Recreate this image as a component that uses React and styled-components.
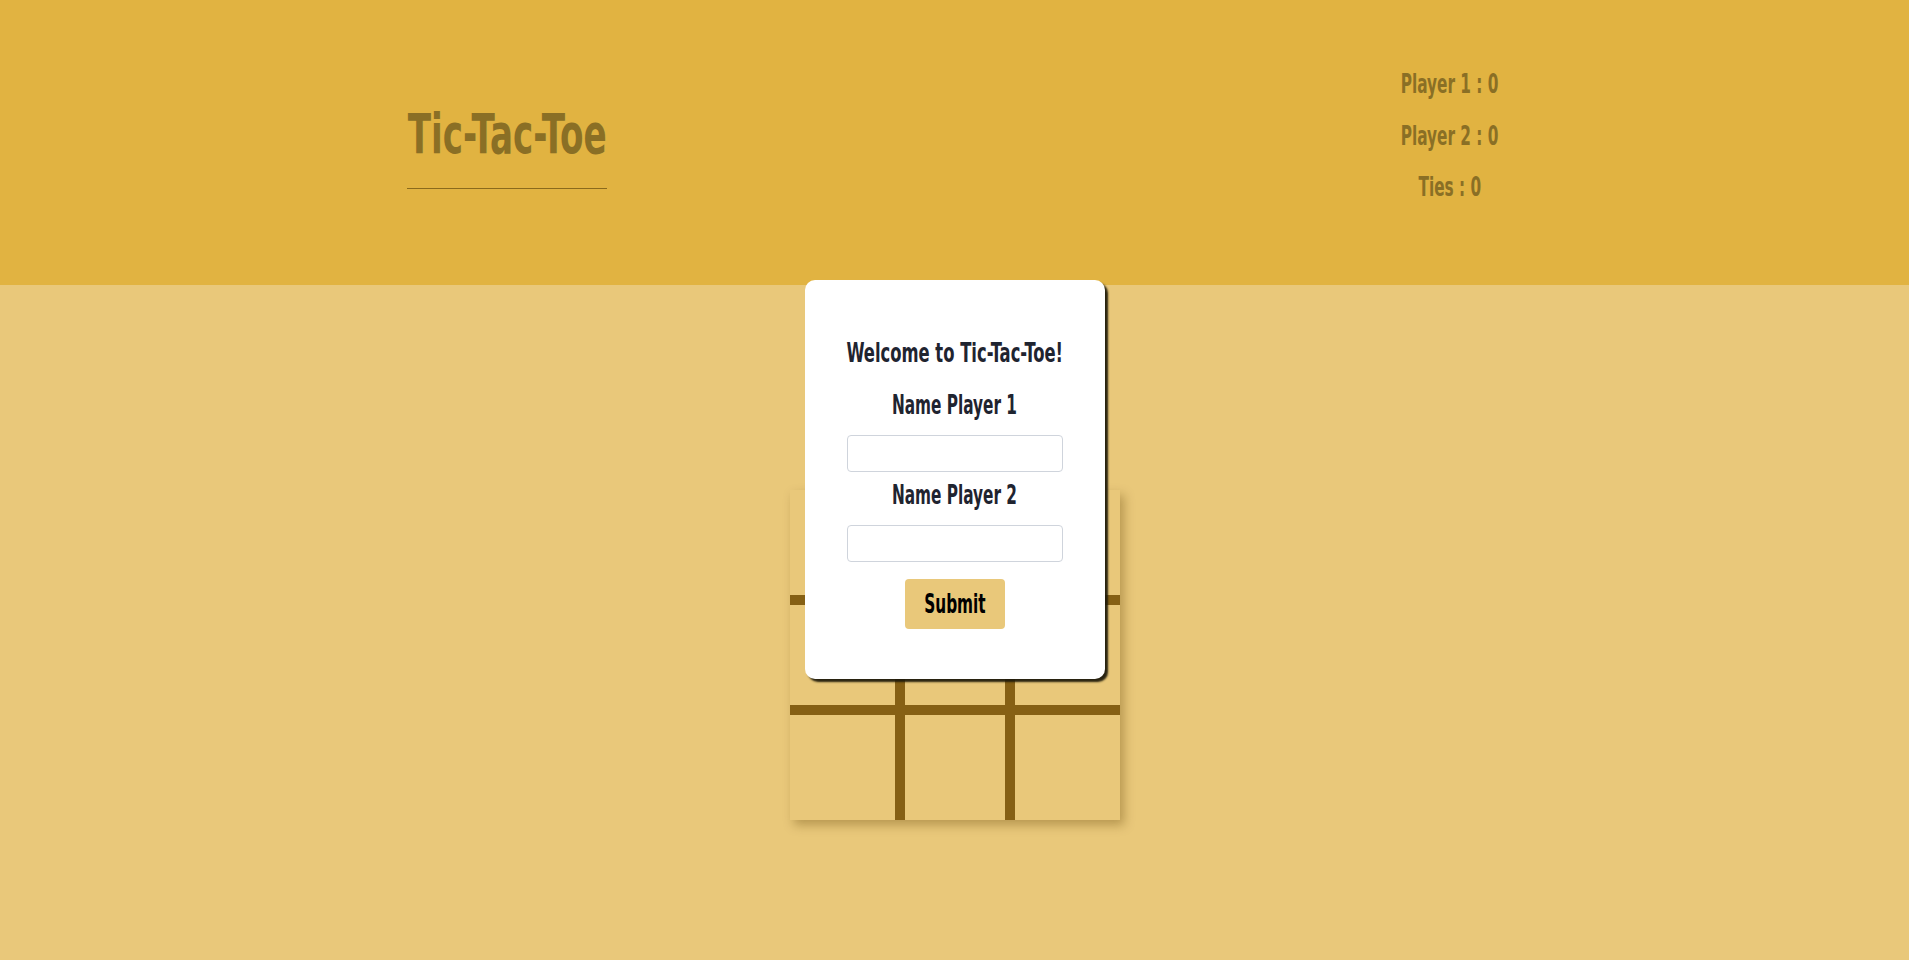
import React from "react";
import styled, { createGlobalStyle } from "styled-components";

const GlobalStyle = createGlobalStyle`
  html, body {
    margin: 0;
    padding: 0;
    background: #e9c87a;
    font-family: "DejaVu Sans Condensed", "DejaVu Sans", "Liberation Sans", sans-serif;
    font-weight: 700;
  }
  * { box-sizing: border-box; }
`;

const cells = [0, 1, 2, 3, 4, 5, 6, 7, 8];

const App = () => {
  return (
    <Page>
      <GlobalStyle />
      <Header>
        <TitleBox>
          <Title>Tic-Tac-Toe</Title>
        </TitleBox>
        <Scores>
          <Score>Player 1 : 0</Score>
          <Score>Player 2 : 0</Score>
          <Score>Ties : 0</Score>
        </Scores>
      </Header>
      <Main>
        <Board>
          {cells.map((i) => (
            <Cell key={i} $col={i % 3} $row={Math.floor(i / 3)} />
          ))}
        </Board>
        <Modal>
          <Heading>Welcome to Tic-Tac-Toe!</Heading>
          <Label htmlFor="p1">Name Player 1</Label>
          <Input id="p1" type="text" />
          <Label htmlFor="p2" $second>Name Player 2</Label>
          <Input id="p2" type="text" />
          <Submit type="button">
            <Squeeze>Submit</Squeeze>
          </Submit>
        </Modal>
      </Main>
    </Page>
  );
};

const Page = styled.div`
  min-height: 960px;
  background: #e9c87a;
`;

const Header = styled.header`
  height: 285px;
  background: #e1b341;
  display: flex;
  align-items: flex-start;
  justify-content: space-between;
  padding: 0 409px 0 407px;
`;

const TitleBox = styled.div`
  width: 200px;
  margin-top: 104px;
  padding-bottom: 24px;
  border-bottom: 1px solid #8a6a1c;
  display: flex;
  justify-content: center;
`;

const Title = styled.h1`
  margin: 0;
  font-size: 55px;
  line-height: 60px;
  color: #8a6f25;
  white-space: nowrap;
  transform: scaleX(0.69);
`;

const Scores = styled.div`
  width: 100px;
  margin-top: 69px;
  display: flex;
  flex-direction: column;
  align-items: center;
  gap: 21.5px;
`;

const Score = styled.div`
  font-size: 26px;
  line-height: 30px;
  color: #8a6f25;
  white-space: nowrap;
  transform: scaleX(0.655);
`;

const Main = styled.main`
  position: relative;
  display: flex;
  justify-content: center;
  padding-top: 205px;
`;

const Board = styled.div`
  width: 330px;
  height: 330px;
  display: grid;
  grid-template-columns: repeat(3, 110px);
  grid-template-rows: repeat(3, 110px);
  background: #e9c87a;
  box-shadow: 4px 5px 10px rgba(90, 60, 0, 0.35);
`;

const Cell = styled.div`
  background: #e9c87a;
  border-left: ${(p) => (p.$col > 0 ? "5px solid #866014" : "none")};
  border-right: ${(p) => (p.$col < 2 ? "5px solid #866014" : "none")};
  border-top: ${(p) => (p.$row > 0 ? "5px solid #866014" : "none")};
  border-bottom: ${(p) => (p.$row < 2 ? "5px solid #866014" : "none")};
`;

const Modal = styled.div`
  position: absolute;
  top: -5px;
  left: 50%;
  transform: translateX(-50%);
  width: 300px;
  height: 399px;
  background: #fff;
  border-radius: 10px;
  box-shadow: 3px 3px 2px rgba(30, 25, 10, 0.95);
  padding: 58px 42px 0;
  display: flex;
  flex-direction: column;
  align-items: center;
`;

const Heading = styled.h2`
  margin: 0 0 22px;
  font-size: 26px;
  line-height: 30px;
  color: #1f2430;
  white-space: nowrap;
  transform: scaleX(0.7);
`;

const Label = styled.label`
  display: block;
  font-size: 26px;
  line-height: 30px;
  color: #1f2430;
  white-space: nowrap;
  transform: scaleX(0.655);
  margin: ${(p) => (p.$second ? "8px 0 15px" : "0 0 15px")};
`;

const Input = styled.input`
  width: 216px;
  height: 37px;
  border: 1px solid #cfd4dc;
  border-radius: 4px;
  background: #fff;
  outline: none;
  font-size: 16px;
  padding: 0 8px;
`;

const Submit = styled.button`
  margin-top: 17px;
  width: 100px;
  height: 50px;
  padding: 0;
  border: none;
  border-radius: 4px;
  background: #e9c87a;
  color: #000;
  font-family: inherit;
  font-weight: 700;
  font-size: 26px;
  display: flex;
  align-items: center;
  justify-content: center;
  cursor: pointer;
`;

const Squeeze = styled.span`
  display: inline-block;
  transform: scaleX(0.655);
`;

export default App;
